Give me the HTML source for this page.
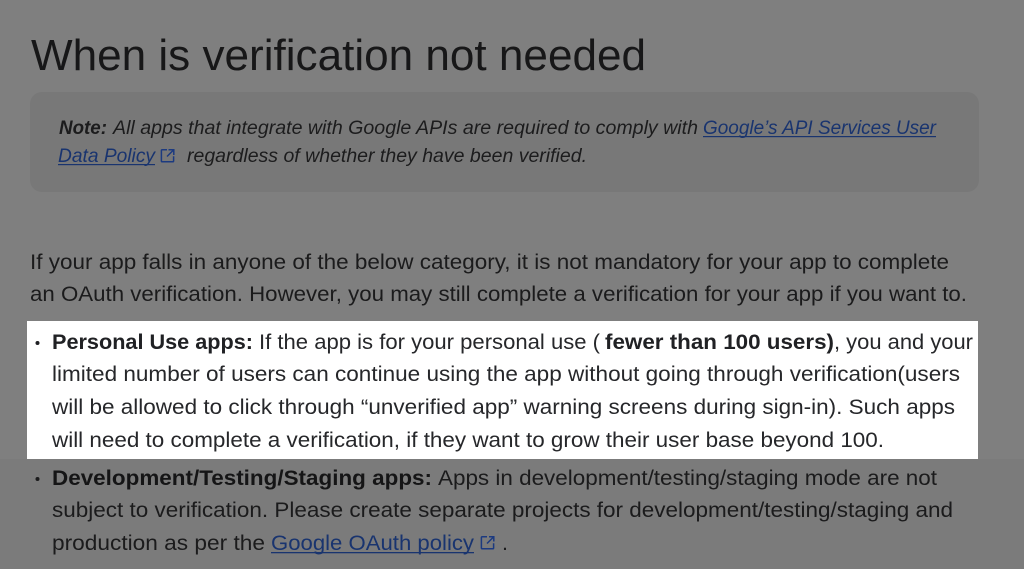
<!DOCTYPE html>
<html><head><meta charset="utf-8"><style>
html,body{margin:0;padding:0;background:#7f7f7f;width:1024px;height:569px;overflow:hidden}
svg{display:block}
text{font-family:"Liberation Sans",sans-serif;font-size:21.500px;fill:#1b1b1c;white-space:pre}
.b{font-weight:bold;fill:#151516}
.n{font-size:19.500px;font-style:italic;fill:#1c1c1d}
.l{fill:#19346f}
.w{fill:#26272a}
.wb{fill:#202124;font-weight:bold}
</style></head><body>
<svg width="1024" height="569" viewBox="0 0 1024 569" xmlns="http://www.w3.org/2000/svg">
<rect width="1024" height="569" fill="#7f7f7f"/>
<rect y="459" width="1024" height="110" fill="#7b7b7b"/>
<rect x="30" y="92" width="949" height="100" rx="12" fill="#787878"/>
<rect x="27" y="321" width="951" height="138" fill="#fff"/>

<text x="31" y="70" style="font-size:44px;fill:#171718" textLength="615" lengthAdjust="spacingAndGlyphs">When is verification not needed</text>

<text x="59" y="134" class="n" style="font-weight:bold" textLength="48" lengthAdjust="spacingAndGlyphs">Note:</text>
<text x="113" y="134" class="n" textLength="585" lengthAdjust="spacingAndGlyphs">All apps that integrate with Google APIs are required to comply with</text>
<text x="703" y="134" class="n l" textLength="233" lengthAdjust="spacingAndGlyphs">Google’s API Services User</text>
<rect x="703" y="136" width="233" height="1.200" fill="#19346f"/>
<text x="58" y="162" class="n l" textLength="97" lengthAdjust="spacingAndGlyphs">Data Policy</text>
<rect x="58" y="164" width="97" height="1.200" fill="#19346f"/>
<path d="M167 149.700h-4.800a.8.8 0 0 0-.8.8v10.500a.8.8 0 0 0 .8.8h10.600a.8.8 0 0 0 .8-.8v-4.800M168.500 149.700h5.300v5.300M173.500 150l-6.500 6.500" fill="none" stroke="#1c3a80" stroke-width="1.500"/>
<text x="187" y="162" class="n" textLength="400" lengthAdjust="spacingAndGlyphs">regardless of whether they have been verified.</text>

<text x="30" y="269" textLength="919" lengthAdjust="spacingAndGlyphs">If your app falls in anyone of the below category, it is not mandatory for your app to complete</text>
<text x="30" y="301" textLength="937" lengthAdjust="spacingAndGlyphs">an OAuth verification. However, you may still complete a verification for your app if you want to.</text>

<circle cx="37.500" cy="343" r="2" fill="#202124"/>
<text x="52" y="349" class="wb" textLength="201" lengthAdjust="spacingAndGlyphs">Personal Use apps:</text>
<text x="259" y="349" class="w" textLength="341" lengthAdjust="spacingAndGlyphs">If the app is for your personal use (</text>
<text x="605" y="349" class="wb" textLength="229" lengthAdjust="spacingAndGlyphs">fewer than 100 users)</text>
<text x="834" y="349" class="w" textLength="139" lengthAdjust="spacingAndGlyphs">, you and your</text>
<text x="52" y="381" class="w" textLength="908" lengthAdjust="spacingAndGlyphs">limited number of users can continue using the app without going through verification(users</text>
<text x="52" y="414" class="w" textLength="903" lengthAdjust="spacingAndGlyphs">will be allowed to click through “unverified app” warning screens during sign-in). Such apps</text>
<text x="52" y="447" class="w" textLength="832" lengthAdjust="spacingAndGlyphs">will need to complete a verification, if they want to grow their user base beyond 100.</text>

<circle cx="37.500" cy="479" r="2" fill="#1b1b1c"/>
<text x="52" y="485" class="b" textLength="380" lengthAdjust="spacingAndGlyphs">Development/Testing/Staging apps:</text>
<text x="438" y="485" textLength="499" lengthAdjust="spacingAndGlyphs">Apps in development/testing/staging mode are not</text>
<text x="52" y="517" textLength="901" lengthAdjust="spacingAndGlyphs">subject to verification. Please create separate projects for development/testing/staging and</text>
<text x="52" y="550" textLength="213" lengthAdjust="spacingAndGlyphs">production as per the</text>
<text x="271" y="550" class="l" textLength="203" lengthAdjust="spacingAndGlyphs">Google OAuth policy</text>
<rect x="271" y="552" width="203" height="1.300" fill="#19346f"/>
<path d="M487 536.700h-4.800a.8.8 0 0 0-.8.8v10.500a.8.8 0 0 0 .8.8h10.600a.8.8 0 0 0 .8-.8v-4.800M489 536.700h4.800v4.800M493.500 537l-6.500 6.500" fill="none" stroke="#1c3a80" stroke-width="1.500"/>
<text x="502" y="550">.</text>
</svg>
</body></html>
